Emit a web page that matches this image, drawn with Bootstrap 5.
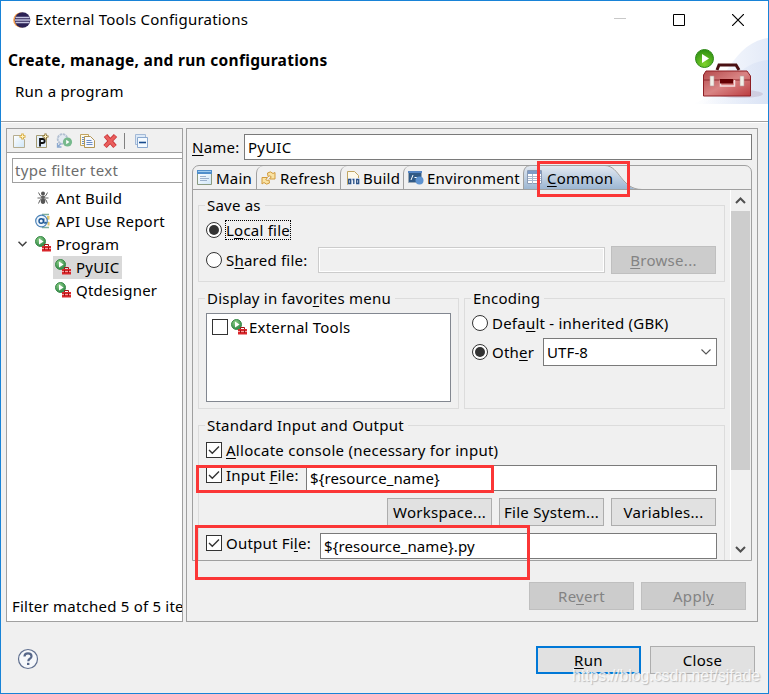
<!DOCTYPE html>
<html lang="en">
<head>
<meta charset="utf-8">
<title>External Tools Configurations</title>
<link rel="stylesheet" href="https://cdn.jsdelivr.net/npm/bootstrap@5.3.0/dist/css/bootstrap.min.css">
<style>
html,body{height:100%}
body{margin:0;overflow:hidden;background:#f0f0f0;color:#000;font-family:"Noto Sans","Open Sans",sans-serif;font-size:15px;line-height:22px;letter-spacing:.22px}
svg{display:block;flex:none}
u{text-underline-offset:2px;text-decoration-thickness:1px}
.window{width:769px;height:694px;border:1px solid #1883d7}
.titlebar{height:37px;padding-left:12px}
.titlebar .caps{margin-right:24px;gap:47px}
.title-text{margin-top:-2px}
.banner{height:83px;background:#fff}
.banner h1{font-size:15.5px;line-height:22px;font-weight:700;letter-spacing:.3px;padding:11px 0 0 7px;margin:0 0 9px}
.banner p{padding-left:14px}
.rule{height:2px;background:#fff;border-top:1px solid #a0a0a0}
.work{height:494px;margin:5px 10px 0 5px;gap:3px}
.side{width:177px;border:1px solid #a0a0a0;background:#fff;flex:none}
.tools{height:24px;background:#f0f0f0;border-bottom:1px solid #a0a0a0;padding-left:4px}
.filter{height:25px;margin:5px 0 0 5px;border:1px solid #a0a0a0;border-right:0;color:#6d6d6d;padding:0 0 2px 2px;letter-spacing:.3px}
.tree{margin-top:3px}
.node{height:23.2px}
.lv1{padding-left:28px}
.lv1-open{padding-left:11px}
.lv2{padding-left:48px}
.lv2-picked{padding-left:46px}
.tree svg.pic{margin-right:5px}
.picked{background:#d9d9d9;height:23px;width:69px;padding-left:2px}
.status{padding:0 0 4px 5px}
.panel{border:1px solid #a0a0a0;padding:5px 5px 0}
.name-box{width:508px;height:26px;border:1px solid #7a7a7a;background:#fff;padding-left:3px}
.folder{margin-top:5px;height:396px;width:560px;border:1px solid #a0a0a0;border-radius:7px 7px 0 0}
.tabs{height:24px;border-bottom:1px solid #a0a0a0}
.tab{height:23px;padding-left:4px;gap:3px}
.tab+.tab{border-left:1px solid #a0a0a0;border-top-left-radius:7px}
.chosen{width:119px;border:0!important;gap:4px}
.pane{height:370px}
.body-area{width:537px;padding:15px 5px 0}
.vscroll{width:20px;border-left:1px solid #fff}
.thumb{height:259px;width:19px;background:#cdcdcd}
.box{border:1px solid #dcdcdc}
.box .cap-text{display:block;width:max-content;background:#f0f0f0;margin:-12px 0 0 6px;padding:0 4px 0 2px;height:23px}
.radio{width:16px;height:16px;border:1px solid #333;border-radius:50%;background:#fff;flex:none;padding:2px}
.radio.on::before{content:"";display:block;width:10px;height:10px;border-radius:50%;background:#333}
.check{width:16px;height:16px;border:1px solid #333;background:#fff;flex:none}
.focus-text{outline:1px dotted #000;line-height:19px;height:18px;display:block;margin-top:-1px}
.lift{margin-top:-1px}
.field{height:26px;border:1px solid #7a7a7a;background:#fff;padding-left:3px;letter-spacing:.1px}
.field.off{border-color:#ccc;background:#f0f0f0;box-shadow:inset 0 0 0 1px #fff}
.key{width:105px;height:28px;padding:0;border:1px solid #adadad;border-radius:0;background:#e1e1e1;color:#000;font-size:inherit;line-height:24px;letter-spacing:.3px;white-space:nowrap}
.key:disabled{background:#ccc;border-color:#bfbfbf;color:#838383;opacity:1}
.key.main{border:2px solid #0078d7}
.fav{width:245px;height:89px;border:1px solid #828790;background:#fff;margin:3px 0 0 7px;padding:5px 0 0 5px}
.marker{position:absolute;border:3px solid #fb3636}
.stamp{position:absolute;left:571px;top:664px;font-family:"Liberation Sans",Arial,sans-serif;font-size:16px;letter-spacing:-.08px;color:rgba(255,255,255,.8);text-shadow:1px 1px 1px #bbb}
</style>
<script src="https://cdn.jsdelivr.net/npm/bootstrap@5.3.0/dist/js/bootstrap.bundle.min.js"></script>
</head>
<body>
<svg width="0" height="0" class="position-absolute">
<defs>
<radialGradient id="gr" cx=".4" cy=".3" r=".8"><stop offset="0" stop-color="#8fd08a"/><stop offset="1" stop-color="#1f7d3a"/></radialGradient>
<linearGradient id="tabg" x1="0" y1="0" x2="0" y2="1"><stop offset="0" stop-color="#e3e9f1"/><stop offset="1" stop-color="#99b4d1"/></linearGradient>
<linearGradient id="redg" x1="0" y1="0" x2="1" y2="1"><stop offset="0" stop-color="#b54a4c"/><stop offset=".5" stop-color="#d98484"/><stop offset="1" stop-color="#bb3c40"/></linearGradient>
<radialGradient id="limeg" cx=".5" cy=".8" r=".8"><stop offset="0" stop-color="#7fd42c"/><stop offset="1" stop-color="#2c8d12"/></radialGradient>
<linearGradient id="skyg" x1="0" y1="0" x2="1" y2="0"><stop offset="0" stop-color="#fff"/><stop offset="1" stop-color="#dbe4f6"/></linearGradient>
<linearGradient id="hazeg" x1="0" y1="0" x2="1" y2="0"><stop offset="0" stop-color="#d5dff3" stop-opacity="0"/><stop offset="1" stop-color="#cfdbf2"/></linearGradient>
<linearGradient id="winfill" x1="0" y1="0" x2="1" y2="1"><stop offset="0" stop-color="#fff"/><stop offset="1" stop-color="#cfe6f8"/></linearGradient>
<symbol id="runtool" viewBox="0 0 16 16"><circle cx="5.500" cy="5.500" r="5" fill="url(#gr)" stroke="#3b8a4a"/><path d="M4 2.500v6l4.600-3z" fill="#fff"/><path d="M9.500 10.500V8.500h4v2" fill="none" stroke="#a01515"/><path d="M7 10h9v5.500H7z" fill="#d9262b"/><path d="M7 12.500h9" stroke="#f3a0a0"/><path d="M9.500 11v3M13.500 11v3" stroke="#a01515"/></symbol>
<symbol id="tick" viewBox="0 0 14 14"><path d="M2 7l3.300 3.300L12 3.600" fill="none" stroke="#333" stroke-width="1.400"/></symbol>
</defs>
</svg>
<div class="window position-relative">
  <header class="bg-white">
    <div class="titlebar d-flex align-items-center">
      <svg width="18" height="18" viewBox="0 0 18 18"><circle cx="7.800" cy="9" r="7.600" fill="#f7a04a"/><circle cx="9.500" cy="9" r="7.800" fill="#2c2255"/><path d="M2.500 6.500h14M2 9h15M2.500 11.500h14" stroke="#c4c4e0" stroke-width="1.300"/></svg>
      <span class="title-text ms-1">External Tools Configurations</span>
      <div class="caps d-flex ms-auto align-items-center">
        <svg width="12" height="13"><path d="M0 5.500h12" stroke="#c8c8c8"/></svg>
        <svg width="12" height="12"><path d="M.5.500h11v11H.500z" fill="none" stroke="#000"/></svg>
        <svg width="12" height="12"><path d="M0 0l12 12M12 0L0 12" stroke="#000" stroke-width="1.200"/></svg>
      </div>
    </div>
    <div class="banner d-flex justify-content-between">
      <div><h1>Create, manage, and run configurations</h1><p class="m-0">Run a program</p></div>
      <svg width="75" height="83" viewBox="693 38 75 83"><path d="M693 104c30-8 35-60 75-66v66z" fill="url(#skyg)" opacity=".75"/><path d="M700 104c20-4 35-42 68-44v44z" fill="url(#hazeg)" opacity=".45"/><ellipse cx="740" cy="94" rx="23" ry="4" fill="#b6a7bd" opacity=".4"/><path d="M717 70l2-5h17l3 5" fill="none" stroke="#4a1012" stroke-width="3"/><path d="M706 71h41l3.500 5V96H703.500V75z" fill="url(#redg)" stroke="#8e1f25"/><path d="M704 80h46" stroke="#8e2a2e"/><path d="M720.500 80v6h14v-6" fill="none" stroke="#f4dede" stroke-width="1.500"/><path d="M720 79h13v4.500h-13z" fill="#640003"/><path d="M710 76h4v10h-4zM740 76h4v10h-4z" fill="#f1efe8" stroke="#b99" stroke-width=".6"/><circle cx="704.500" cy="58.500" r="9" fill="url(#limeg)" stroke="#2f8a18"/><path d="M702 54v9l7-4.500z" fill="#fff"/></svg>
    </div>
    <div class="rule"></div>
  </header>
  <main class="work d-flex">
    <aside class="side d-flex flex-column overflow-hidden">
      <div class="tools d-flex align-items-center">
        <svg width="137" height="16" viewBox="11 0 137 16">
          <path d="M13.500 2.500h7l4 4v8h-11z" fill="url(#winfill)" stroke="#b5ad90"/><path d="M22.500.500v6M19.500 3.500h6" stroke="#d9ae45" stroke-width="2.600"/><path d="M22.500 1.500v4M20.500 3.500h4" stroke="#fff3c4"/>
          <path d="M36.500 2.500h10v12h-10z" fill="#e3effb" stroke="#a59a70"/><path d="M40 13.500V6h2.500q2.200 0 2.200 2t-2.200 2H40" fill="none" stroke="#111" stroke-width="1.800"/><path d="M45.500.500v6M42.500 3.500h6" stroke="#8a7130" stroke-width="2.200"/><path d="M45.500 1.500v4M43.500 3.500h4" stroke="#fff3c4"/>
          <circle cx="62.500" cy="6" r="4.800" fill="#e4eaf1" stroke="#b3c0d2" stroke-width="1.800" stroke-dasharray="2.500 .7"/><path d="M57.500 10v4h4M58 13.500l3-3" fill="none" stroke="#8ba9cf" stroke-width="1.300"/><circle cx="67.500" cy="9" r="4.600" fill="#76b98c"/><path d="M66.200 6.800v4.400l3.200-2.200z" fill="#fff"/>
          <path d="M80.500 1.500h8v11h-8z" fill="#fffbe8" stroke="#c3a461"/><path d="M84.500 3.500h6l4 4v7h-10z" fill="#f5f8ff" stroke="#b39552"/><path d="M82 4.500h2M82 6.500h2M82 8.500h2M82 10.500h2M86.500 7.500h5M86.500 9.500h6M86.500 11.500h6" stroke="#6b8dc4"/>
          <path d="M105.500 2.500l9.500 11M115.500 2.500l-10.500 11" stroke="#c9373b" stroke-width="4.600"/><path d="M105.800 3l9 10.300M115.200 3l-10 10.300" stroke="#ea5f5d" stroke-width="2.800"/>
          <path d="M124 0h1v16h-1z" fill="#808080"/>
          <path d="M135.500 1.500h10v10h-10z" fill="#dce9f7" stroke="#a3b9d6"/><path d="M137.500 4.500h10v10h-10z" fill="#f4faff" stroke="#8aa8cf"/><path d="M139 9.500h7" stroke="#174a8c" stroke-width="1.600"/>
        </svg>
      </div>
      <div class="filter d-flex align-items-center">type filter text</div>
      <div class="tree">
        <div class="node lv1 d-flex align-items-center"><svg width="16" height="16" viewBox="0 0 16 16" class="pic"><g fill="#555"><circle cx="8" cy="3.500" r="2"/><circle cx="8" cy="7.300" r="1.700"/><ellipse cx="8" cy="11.300" rx="2.200" ry="2.700"/></g><path d="M3.500 2.500l1.500 3 3 1.700 3-1.700 1.500-3M2.500 8h11M3.500 13.500l1.500-3.500 3-1.500 3 1.500 1.500 3.500" fill="none" stroke="#666"/></svg>Ant Build</div>
        <div class="node lv1 d-flex align-items-center"><svg width="16" height="16" viewBox="0 0 16 16" class="pic"><path d="M7 1.500h7M12 5.500h2M12 9.500h2M7 14.500h7" stroke="#7fae9c" stroke-width="1.500"/><path d="M12 3h2.500v3.500H12zM12.500 9h2v3.500h-2z" fill="#e2c66a"/><circle cx="6.500" cy="8" r="5.800" fill="#eef5fc" stroke="#4b82b8" stroke-width="1.200"/><circle cx="6.200" cy="8" r="2.200" fill="none" stroke="#1d5795" stroke-width="1.400"/><path d="M8.800 5.500v4q1.200 1.400 2.600-.5" fill="none" stroke="#1d5795" stroke-width="1.300"/></svg>API Use Report</div>
        <div class="node lv1-open d-flex align-items-center"><svg width="9" height="6" viewBox="0 0 9 6" class="me-2"><path d="M.5.700l4 4 4-4" fill="none" stroke="#404040" stroke-width="1.500"/></svg><svg width="16" height="16" class="pic"><use href="#runtool"/></svg>Program</div>
        <div class="node lv2-picked d-flex align-items-center"><div class="picked d-flex align-items-center"><svg width="16" height="16" class="pic"><use href="#runtool"/></svg>PyUIC</div></div>
        <div class="node lv2 d-flex align-items-center"><svg width="16" height="16" class="pic"><use href="#runtool"/></svg>Qtdesigner</div>
      </div>
      <div class="status mt-auto text-nowrap">Filter matched 5 of 5 items</div>
    </aside>
    <section class="panel flex-grow-1">
      <div class="d-flex align-items-center justify-content-between" style="width:560px"><span><u>N</u>ame:</span><div class="name-box d-flex align-items-center">PyUIC</div></div>
      <div class="folder">
        <nav class="tabs d-flex">
          <div class="tab d-flex align-items-center" style="width:63px"><svg width="16" height="16"><path d="M.5.500h14v14H.500z" fill="url(#winfill)" stroke="#8a9a80"/><path d="M0 0h15v4H0z" fill="#4f8ecb"/><path d="M1 1h13v1H1z" fill="#9fcbee"/><path d="M3 6.500h6M3 8.500h9M3 10.500h7" stroke="#9ab0cc"/></svg>Main</div>
          <div class="tab d-flex align-items-center" style="width:84px"><svg width="16" height="16"><path d="M6.500 3Q9.500.500 12 3.500L14 2.500V9H8.500l1.800-2.200Q9 5 7 6.500zM8.500 13Q5.500 15.500 3 12.500L1 14V7.500H6.500L4.800 9.700Q6 11 8 10z" fill="#fae3a4" stroke="#d19a3c"/></svg>Refresh</div>
          <div class="tab d-flex align-items-center" style="width:63px;gap:2px"><svg width="16" height="16"><path d="M2.500 1.500h7l4 4v9h-11z" fill="#fdf9ea" stroke="#c0a562"/><path d="M3 8h12v7H3z" fill="#eef2f8"/><path d="M3.700 9.500h2v4h-2zM7.500 9.500h1.300v4.500M11.700 9.500h2v4h-2z" fill="none" stroke="#274f86" stroke-width="1.300"/></svg>Build</div>
          <div class="tab d-flex align-items-center" style="width:120px"><svg width="16" height="16"><path d="M.5 1.500h13v11H.500z" fill="#315a86" stroke="#9aa8b6"/><path d="M0 1h14v2H0z" fill="#5585c4"/><path d="M3 10l2-5M6.500 7.500h2.500" stroke="#fff"/><circle cx="11.500" cy="10.500" r="4" fill="#5d92d0"/></svg>Environment</div>
          <div class="tab chosen d-flex align-items-center position-relative"><svg class="position-absolute start-0 top-0 z-n1" width="119" height="24"><path d="M.5 24V7Q1 0 7 0H82C97 0 98 24 119 24z" fill="url(#tabg)"/><path d="M.5 24V7Q1 0 7-.5M82-.5C97 0 98 23.500 119 23.500" fill="none" stroke="#a0a0a0"/></svg><svg width="16" height="16"><path d="M.5.500h14v13H.500z" fill="#fff" stroke="#8a9ab4"/><path d="M1 1h13v3H1z" fill="#7f9cc6"/><path d="M1 6.500h13M1 8.500h13M1 10.500h13M5.500 4v10" stroke="#a9b8cf"/></svg><span><u>C</u>ommon</span></div>
        </nav>
        <div class="pane d-flex overflow-hidden">
          <div class="body-area">
            <div class="box" style="height:77px">
              <span class="cap-text">Save as</span>
              <div class="d-flex align-items-center" style="margin:2px 0 0 7px;height:22px"><i class="radio on"></i><span class="focus-text" style="margin-left:4px">L<u>o</u>cal file</span></div>
              <div class="d-flex align-items-center" style="margin:5px 0 0 7px;height:28px"><i class="radio"></i><span style="margin-left:4px;width:92px">S<u>h</u>ared file:</span><div class="field off" style="width:287px"></div><button class="btn key ms-auto" style="margin-right:8px" disabled><u>B</u>rowse...</button></div>
            </div>
            <div class="d-flex" style="margin-top:16px;gap:5px">
              <div class="box" style="width:261px;height:111px">
                <span class="cap-text">Display in favo<u>r</u>ites menu</span>
                <div class="fav d-flex align-items-start"><i class="check"></i><svg width="16" height="16" style="margin:0 2px 0 3px"><use href="#runtool"/></svg><span style="margin-top:-3px">External Tools</span></div>
              </div>
              <div class="box" style="width:261px;height:111px">
                <span class="cap-text">Encoding</span>
                <div class="d-flex align-items-center" style="margin:2px 0 0 7px;height:22px"><i class="radio"></i><span style="margin-left:4px">Defa<u>u</u>lt - inherited (GBK)</span></div>
                <div class="d-flex align-items-center" style="margin:4px 0 0 7px;height:28px"><i class="radio on"></i><span style="margin-left:4px;width:51px">Oth<u>e</u>r</span><div class="field d-flex align-items-center justify-content-between" style="width:174px;height:28px;padding:0 5px 1px 3px">UTF-8<svg width="10" height="6"><path d="M.5.500l4.500 4.500L9.500.500" fill="none" stroke="#555" stroke-width="1.100"/></svg></div></div>
              </div>
            </div>
            <div class="box" style="margin-top:16px;height:170px">
              <span class="cap-text">Standard Input and Output</span>
              <div class="d-flex align-items-center" style="margin:2px 0 0 7px;height:22px"><i class="check"><svg width="14" height="14"><use href="#tick"/></svg></i><span style="margin-left:4px;letter-spacing:.27px"><u>A</u>llocate console (necessary for input)</span></div>
              <div class="d-flex" style="margin:4px 0 0 7px;height:26px"><i class="check" style="margin-top:2px"><svg width="14" height="14"><use href="#tick"/></svg></i><span class="lift" style="margin-left:4px;width:80px">Input <u>F</u>ile:</span><div class="field d-flex align-items-center" style="width:411px">${resource_name}</div></div>
              <div class="d-flex justify-content-end" style="margin:7px 8px 0 0;gap:7px"><button class="btn key">Workspace...</button><button class="btn key">File System...</button><button class="btn key">Variables...</button></div>
              <div class="d-flex" style="margin:7px 0 0 7px;height:26px"><i class="check" style="margin-top:2px"><svg width="14" height="14"><use href="#tick"/></svg></i><span class="lift" style="margin-left:4px;width:94px">Output Fi<u>l</u>e:</span><div class="field d-flex align-items-center" style="width:397px">${resource_name}.py</div></div>
            </div>
          </div>
          <div class="vscroll d-flex flex-column align-items-center">
            <svg width="11" height="7" style="margin:7px 0"><path d="M1 6l4.500-4.500L10 6" fill="none" stroke="#505050" stroke-width="2"/></svg>
            <div class="thumb"></div>
            <svg width="11" height="7" class="mt-auto" style="margin-bottom:7px"><path d="M1 1l4.500 4.500L10 1" fill="none" stroke="#505050" stroke-width="2"/></svg>
          </div>
        </div>
      </div>
      <div class="d-flex justify-content-end" style="margin:21px 6px 0 0;gap:7px"><button class="btn key" disabled>Re<u>v</u>ert</button><button class="btn key" disabled>Appl<u>y</u></button></div>
    </section>
  </main>
  <footer class="d-flex align-items-center" style="margin-top:24px;padding:0 13px 0 16px;height:28px">
    <svg width="22" height="22" viewBox="0 0 22 22" style="margin-top:-2px"><circle cx="11" cy="11" r="9.500" fill="#f6f8fb" stroke="#5f6f8f" stroke-width="1.200"/><path d="M7.500 8.500q0-3.200 3.500-3.200t3.500 2.900q0 1.600-1.700 2.600-1.500.900-1.500 2.400" fill="none" stroke="#566789" stroke-width="2.200"/><path d="M10 14.800h2.400v2.200H10z" fill="#566789"/></svg>
    <button class="btn key main ms-auto"><u>R</u>un</button><button class="btn key" style="margin-left:9px">Close</button>
  </footer>
  <div class="marker" style="left:536px;top:160px;width:93px;height:36px"></div>
  <div class="marker" style="left:195px;top:464px;width:298px;height:28px"></div>
  <div class="marker" style="left:194px;top:524px;width:335px;height:55px"></div>
  <div class="stamp">https://blog.csdn.net/sjfade</div>
</div>
</body>
</html>
